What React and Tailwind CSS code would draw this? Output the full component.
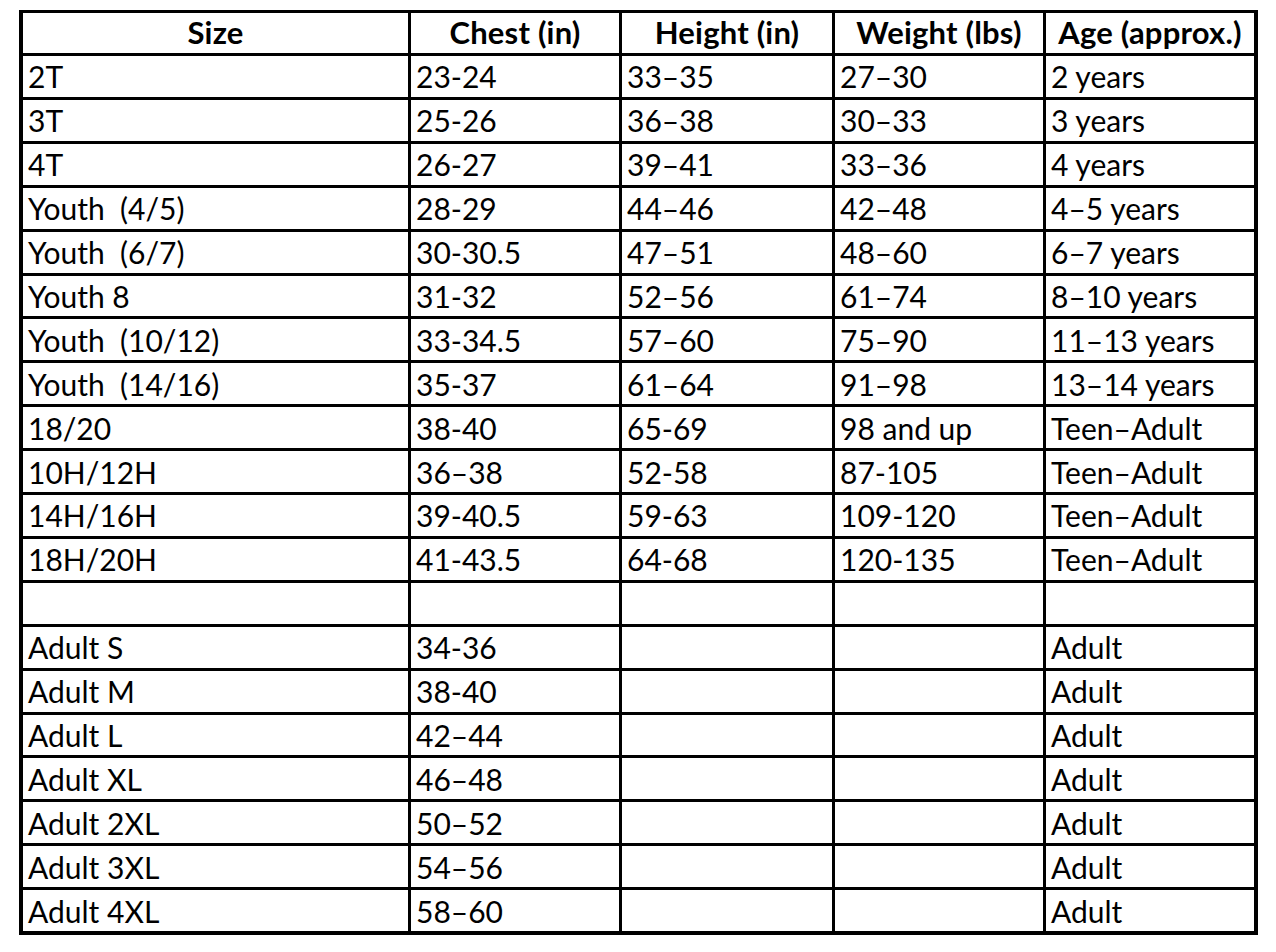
import React from 'react';

const headers = ['Size', 'Chest (in)', 'Height (in)', 'Weight (lbs)', 'Age (approx.)'];

const rows = [
  ['2T', '23-24', '33–35', '27–30', '2 years'],
  ['3T', '25-26', '36–38', '30–33', '3 years'],
  ['4T', '26-27', '39–41', '33–36', '4 years'],
  ['Youth  (4/5)', '28-29', '44–46', '42–48', '4–5 years'],
  ['Youth  (6/7)', '30-30.5', '47–51', '48–60', '6–7 years'],
  ['Youth 8', '31-32', '52–56', '61–74', '8–10 years'],
  ['Youth  (10/12)', '33-34.5', '57–60', '75–90', '11–13 years'],
  ['Youth  (14/16)', '35-37', '61–64', '91–98', '13–14 years'],
  ['18/20', '38-40', '65-69', '98 and up', 'Teen–Adult'],
  ['10H/12H', '36–38', '52-58', '87-105', 'Teen–Adult'],
  ['14H/16H', '39-40.5', '59-63', '109-120', 'Teen–Adult'],
  ['18H/20H', '41-43.5', '64-68', '120-135', 'Teen–Adult'],
  ['', '', '', '', ''],
  ['Adult S', '34-36', '', '', 'Adult'],
  ['Adult M', '38-40', '', '', 'Adult'],
  ['Adult L', '42–44', '', '', 'Adult'],
  ['Adult XL', '46–48', '', '', 'Adult'],
  ['Adult 2XL', '50–52', '', '', 'Adult'],
  ['Adult 3XL', '54–56', '', '', 'Adult'],
  ['Adult 4XL', '58–60', '', '', 'Adult'],
];

export default function App() {
  return (
    <div className="w-[1276px] h-[952px] bg-white pt-[10px] pl-[19px]" style={{ fontFamily: 'Lato, "Open Sans", sans-serif' }}>
      {/* Size chart */}
      <div className="grid w-[1239px] h-[925px] bg-black gap-[3px] pt-[3px] pb-[4px] px-[4px] grid-cols-[385px_208px_210px_208px_208px] grid-rows-[40px_repeat(20,1fr)]">
        {headers.map((h) => (
          <div key={h} className="bg-white flex items-center justify-center text-[31px] font-bold text-black leading-none pb-[1px] tracking-[0.2px]">
            {h}
          </div>
        ))}
        {rows.map((r, i) =>
          r.map((c, j) => (
            <div key={`${i}-${j}`} className="bg-white flex items-center pl-[5px] text-[30px] text-black leading-none whitespace-pre">
              {c}
            </div>
          ))
        )}
      </div>
    </div>
  );
}
